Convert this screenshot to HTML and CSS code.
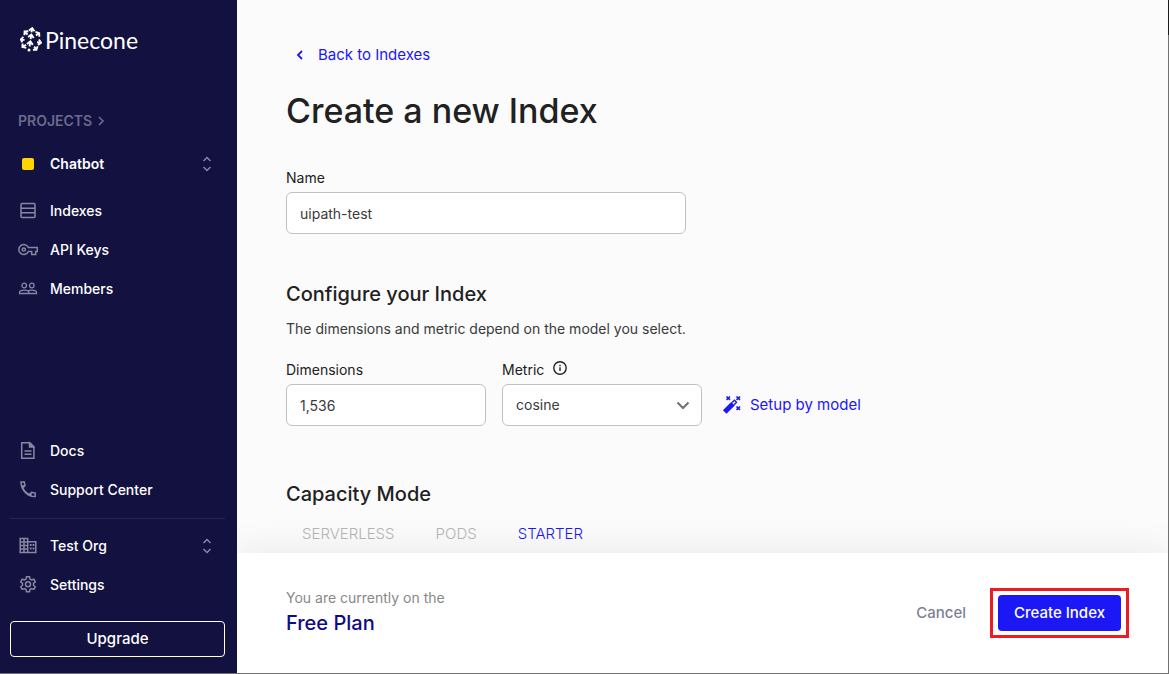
FILE: index.html
```html
<!DOCTYPE html>
<html lang="en">
  <head>
    <title>Create a new Index</title>
    <meta charset="utf-8" />
    <meta name="viewport" content="width=device-width, initial-scale=1" />
    <link rel="stylesheet" href="styles.css">
  </head>
  <body>
    <div class="app">
      <aside class="sidebar">
        <a href="#" class="logo">
          <svg width="22" height="25" viewBox="0 0 22 25" fill="none" stroke="currentColor" stroke-width="1.9">
            <path d="M11.5 5.300 12.100 1.200M9 3.400l3.200-2.300 2.300 3.100" />
            <path d="M10.600 12.200l.7-4.400M8.100 10.100l3.300-2.500 2.300 3.400" />
            <path d="M9.500 19.500l.8-4.900M6.900 17l3.500-2.600 2.400 3.500" />
            <path d="M7.600 7.600 4.900 4.800M4.400 8.200l.2-3.700 3.800-.3" />
            <path d="M15.900 8.400l3.200-2.100M15.400 4.900l3.800 1.200.1 3.700" />
            <path d="M4.500 13.200l-3.300-.8M3.400 9.800.9 12.400l1.300 3" />
            <path d="M17 15.200l3.800.5M18.900 12.500l2.100 3.200-3 2.200" />
            <path d="M6.100 17.900l-3.400 2M2.600 16.500l-.2 3.600 3.900.8" />
            <path d="M14.200 19.500l1.900 3M12.900 22.800l3.500.1 1.200-3.600" />
            <circle cx="9" cy="23" r="1.500" fill="currentColor" stroke="none" />
          </svg>
          <span>Pinecone</span>
        </a>

        <a href="#" class="projects">
          PROJECTS
          <svg width="8" height="10" viewBox="0 0 8 10" fill="none" stroke="currentColor" stroke-width="1.7"><path d="M2 1l4 4-4 4" /></svg>
        </a>

        <nav class="nav">
          <a href="#" class="nav-item project">
            <span class="nav-icon"><span class="swatch"></span></span>
            <span class="nav-text">Chatbot</span>
            <svg class="sorter" width="10" height="16" viewBox="0 0 10 16"><path d="M1.500 5 5 1.500 8.500 5M1.500 11 5 14.500 8.500 11" /></svg>
          </a>
          <a href="#" class="nav-item">
            <span class="nav-icon">
              <svg width="20" height="20" viewBox="0 0 20 20" class="line"><rect x="3" y="2.500" width="14" height="14" rx="1" /><path d="M3 7.200h14M3 11.800h14" /></svg>
            </span>
            <span class="nav-text">Indexes</span>
          </a>
          <a href="#" class="nav-item">
            <span class="nav-icon">
              <svg width="20" height="20" viewBox="0 0 20 20" class="line"><path d="M10.400 7.500h8.900v4h-1.600v3h-4v-3h-3.300a5 5 0 1 1 0-4z" /><circle cx="5.800" cy="9.500" r="1.600" /></svg>
            </span>
            <span class="nav-text">API Keys</span>
          </a>
          <a href="#" class="nav-item">
            <span class="nav-icon">
              <svg width="20" height="20" viewBox="0 0 20 20" class="line thin"><circle cx="6.200" cy="6.500" r="2.300" /><circle cx="13.800" cy="6.500" r="2.300" /><path d="M1.500 14.500v-1c0-1.500 2.500-2.400 4.700-2.400s4.700.9 4.700 2.400v1zM10 11.900c1-.5 2.500-.8 3.800-.8 2.200 0 4.700.9 4.700 2.400v1h-7.600" /></svg>
            </span>
            <span class="nav-text">Members</span>
          </a>
        </nav>

        <nav class="nav nav-bottom">
          <a href="#" class="nav-item">
            <span class="nav-icon">
              <svg width="20" height="20" viewBox="0 0 20 20" class="line"><path d="M4.600 1.700h7.300l4 4v11.600H3.700V1.700z" /><path d="M11.500 2v4h4z" fill="currentColor" /><path d="M6.500 10h7M6.500 13.300h7" /></svg>
            </span>
            <span class="nav-text">Docs</span>
          </a>
          <a href="#" class="nav-item">
            <span class="nav-icon">
              <svg width="20" height="20" viewBox="0 0 20 20" class="line"><path d="M3 2h3.300l.7 3.800-2.200 2a12 12 0 0 0 6.700 6.600l2.100-2.100 3.600.7v3.500C10 17 3 10 3 2zM3.500 6.300l2.500-.5M13 13.500v2.500" /></svg>
            </span>
            <span class="nav-text">Support Center</span>
          </a>
        </nav>

        <nav class="nav nav-org">
          <a href="#" class="nav-item">
            <span class="nav-icon">
              <svg width="20" height="20" viewBox="0 0 20 20" class="line"><path d="M2.200 2.500h7.500v14H2.200zM9.700 5.700h8.100v10.800H9.700zM6 2.500v14M2.200 6h7.500M2.200 9.500h7.500M2.200 13h7.500" /><path d="M11.800 9h1.800M14.600 9h1.800M11.800 12.500h1.800M14.600 12.500h1.800" stroke-width="1.800" /></svg>
            </span>
            <span class="nav-text">Test Org</span>
            <svg class="sorter" width="10" height="16" viewBox="0 0 10 16"><path d="M1.500 5 5 1.500 8.500 5M1.500 11 5 14.500 8.500 11" /></svg>
          </a>
          <a href="#" class="nav-item">
            <span class="nav-icon">
              <svg width="20" height="20" viewBox="0 0 20 20" class="line"><path d="M8.500 1.800h3l.5 2.300 1.500.9 2.300-.8 1.500 2.600-1.800 1.600v1.800l1.800 1.600-1.500 2.600-2.300-.8-1.500.9-.5 2.300h-3L8 14.500l-1.500-.9-2.300.8-1.500-2.600 1.800-1.600V8.400L2.700 6.800l1.500-2.600 2.300.8L8 4.100z" /><circle cx="10" cy="9.300" r="2.500" /></svg>
            </span>
            <span class="nav-text">Settings</span>
          </a>
        </nav>

        <button type="button" class="upgrade">Upgrade</button>
      </aside>

      <div class="page">
        <main class="content">
          <a href="#" class="back">
            <svg width="8" height="10" viewBox="0 0 8 10" fill="none" stroke="currentColor" stroke-width="1.800"><path d="M6 1 2 5l4 4" /></svg>
            Back to Indexes
          </a>

          <h1>Create a new Index</h1>

          <form id="index-form">
            <div class="field field-wide">
              <label for="name">Name</label>
              <input type="text" id="name" value="uipath-test" />
            </div>

            <h2>Configure your Index</h2>
            <p>The dimensions and metric depend on the model you select.</p>

            <div class="row">
              <div class="field">
                <label for="dimensions">Dimensions</label>
                <input type="text" id="dimensions" value="1,536" />
              </div>

              <div class="field">
                <label for="metric">
                  Metric
                  <svg width="16" height="16" viewBox="0 0 16 16" fill="none" stroke="currentColor" stroke-width="1.400"><circle cx="8" cy="8" r="6.200" /><path d="M8 7.300V11M8 4.700v1.500" /></svg>
                </label>
                <div class="select">
                  <select id="metric">
                    <option>cosine</option>
                    <option>euclidean</option>
                    <option>dotproduct</option>
                  </select>
                  <svg width="14" height="9" viewBox="0 0 14 9" fill="none" stroke="currentColor" stroke-width="2"><path d="M1.500 1.500 7 7l5.500-5.500" /></svg>
                </div>
              </div>

              <button type="button" class="setup">
                <svg width="20" height="20" viewBox="0 0 20 20" fill="none" stroke="currentColor"><path d="M2.700 17 11 8.700" stroke-width="5" /><path d="M10 7.500l2.500-2.300 2 2-2.300 2.500" stroke-width="1.400" /><path d="M4.500 1.500l3.500 3.300M8 1.500 4.500 4.800M14.500 1.500l3.500 3.300M18 1.500l-3.500 3.300M14.500 11.500l3.500 3.300M18 11.500l-3.500 3.300" stroke-width="1.600" /></svg>
                Setup by model
              </button>
            </div>

            <h2>Capacity Mode</h2>
            <div class="tabs" role="tablist">
              <button type="button" role="tab" class="tab" disabled>SERVERLESS</button>
              <button type="button" role="tab" class="tab" disabled>PODS</button>
              <button type="button" role="tab" class="tab active" aria-selected="true">STARTER</button>
            </div>
          </form>
        </main>

        <footer class="footer">
          <div class="plan">
            <span>You are currently on the</span>
            <strong>Free Plan</strong>
          </div>
          <button type="button" class="cancel">Cancel</button>
          <div class="highlight">
            <button type="submit" form="index-form" class="create">Create Index</button>
          </div>
        </footer>
      </div>
    </div>
  </body>
</html>
```

FILE: styles.css
```css
:root {
  --navy: #131140;
  --blue: #1c17f5;
  --ink: #212121;
  --border: #c1c1c1;
}

* {
  box-sizing: border-box;
}

body,
input,
select,
button {
  font-family: Inter, "Liberation Sans", sans-serif;
  font-size: 14px;
  line-height: 20px;
}

body {
  margin: 0;
  color: var(--ink);
}

a {
  text-decoration: none;
}

button {
  padding: 0;
  border: none;
  background: none;
  font-size: 15px;
  cursor: pointer;
}

svg {
  flex: none;
}

.app {
  display: flex;
  height: 100vh;
  border: solid #717171;
  border-width: 0 1px 1px 0;
  border-image: linear-gradient(#1a1a1a 36px, #717171 36px) 1;
}

/* sidebar */

.sidebar {
  display: flex;
  flex-direction: column;
  flex: none;
  width: 237px;
  padding: 26px 12px 16px 10px;
  background: var(--navy);
  color: #8886a3;
}

.logo {
  display: flex;
  align-items: center;
  gap: 3px;
  height: 26px;
  padding-left: 10px;
  color: white;
  font-family: Lato, sans-serif;
  font-size: 23px;
  line-height: 26px;
}

.logo span {
  padding-top: 2px;
}

.projects {
  display: flex;
  align-items: center;
  gap: 5px;
  margin: 59px 0 13px;
  padding-left: 8px;
  color: #6b698c;
  font-weight: 600;
}

.nav-item {
  display: flex;
  align-items: center;
  height: 39px;
  padding: 0 13px 0 8px;
  color: inherit;
}

.nav-item.project {
  margin-bottom: 8px;
}

.nav-icon {
  display: flex;
  justify-content: center;
  width: 20px;
  margin-right: 12px;
}

.nav-text {
  flex: 1;
  color: white;
  font-weight: 500;
}

.project .nav-text {
  font-weight: 600;
}

.swatch {
  width: 12px;
  height: 12px;
  border-radius: 2px;
  background: #ffd500;
}

.line {
  fill: none;
  stroke: currentColor;
  stroke-width: 1.5;
}

.thin {
  stroke-width: 1.3;
}

.sorter {
  fill: none;
  stroke: currentColor;
  stroke-width: 1.5;
}

.nav-bottom {
  margin-top: auto;
  padding-bottom: 9px;
  border-bottom: 1px solid #25234f;
}

.nav-org {
  padding: 7px 0 17px;
}

.upgrade {
  height: 36px;
  border: 1px solid white;
  border-radius: 4px;
  color: white;
  font-weight: 500;
}

/* page */

.page {
  display: flex;
  flex-direction: column;
  flex: 1;
  min-width: 0;
  overflow: hidden;
}

.content {
  flex: 1;
  min-height: 0;
  overflow: hidden;
  padding: 43px 48px 0 49px;
  background: #fbfbfb;
}

.back,
.setup {
  display: flex;
  align-items: center;
  color: var(--blue);
}

.back {
  gap: 14px;
  height: 24px;
  padding-left: 10px;
  font-size: 15px;
}

h1 {
  margin: 20px 0 33px;
  font-size: 34px;
  font-weight: 500;
  line-height: 48px;
}

h2 {
  margin: 0;
  font-size: 20px;
  font-weight: 500;
  line-height: 28px;
}

p {
  margin: 11px 0 21px;
  color: #3a3a3a;
}

.field {
  width: 200px;
}

.field-wide {
  width: 400px;
  margin-bottom: 46px;
}

label {
  display: flex;
  gap: 8px;
  margin-bottom: 4px;
}

input,
select {
  display: block;
  width: 100%;
  height: 42px;
  padding: 0 13px;
  border: 1px solid var(--border);
  border-radius: 6px;
  background: white;
  color: #3a3a3a;
}

select {
  appearance: none;
}

.select {
  position: relative;
}

.select svg {
  position: absolute;
  top: 17px;
  right: 12px;
  color: #707070;
  pointer-events: none;
}

.row {
  display: flex;
  align-items: flex-end;
  gap: 16px;
  margin-bottom: 54px;
}

.setup {
  gap: 8px;
  height: 42px;
  padding-left: 4px;
}

.tabs {
  display: flex;
  gap: 41px;
  padding: 16px;
}

.tab {
  color: #b5b5b5;
  font-weight: 300;
}

.tab.active {
  color: var(--blue);
}

/* footer */

.footer {
  position: relative;
  display: flex;
  align-items: center;
  height: 120px;
  padding: 0 39px 0 49px;
  background: white;
  box-shadow: 0 0 40px rgba(20, 20, 40, 0.08);
}

.plan {
  flex: 1;
  color: #888;
}

.plan span,
.plan strong {
  display: block;
}

.plan strong {
  color: #0f0b85;
  font-size: 20px;
  font-weight: 500;
  line-height: 30px;
}

.cancel {
  margin-right: 24px;
  color: #7d7f95;
  font-weight: 500;
}

.highlight {
  padding: 4px 5px;
  border: 3px solid #ed1c24;
}

.create {
  height: 36px;
  padding: 0 16px;
  border-radius: 4px;
  background: var(--blue);
  color: white;
  font-weight: 500;
}
```
